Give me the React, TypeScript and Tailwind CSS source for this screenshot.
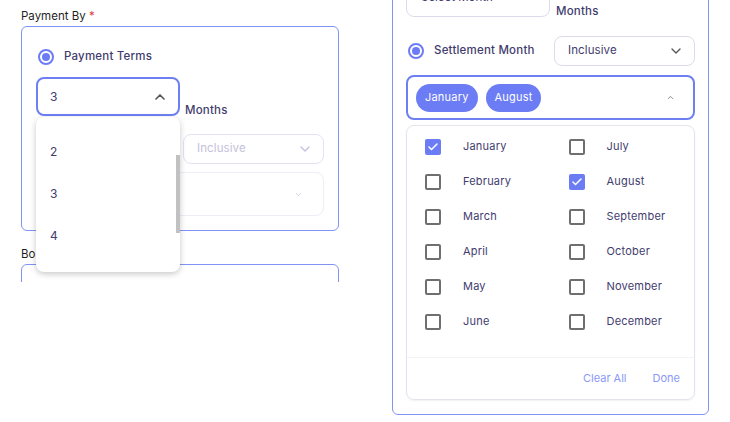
import React from "react";
import { ChevronDown, ChevronUp, Check } from "lucide-react";

const months = [
    "January", "February", "March", "April", "May", "June",
    "July", "August", "September", "October", "November", "December",
];
const selected = ["January", "August"];

const Radio: React.FC<{ checked?: boolean }> = ({ checked }) => (
    <span className={`flex h-4 w-4 items-center justify-center rounded-full border-2 ${checked ? "border-[#6b7cf5]" : "border-[#9a98b0]"}`}>
        {checked && <span className="h-2 w-2 rounded-full bg-[#6b7cf5]" />}
    </span>
);

const Checkbox: React.FC<{ checked?: boolean }> = ({ checked }) =>
    checked ? (
        <span className="flex h-4 w-4 items-center justify-center rounded-[2px] bg-[#6b7cf5]">
            <Check size={12} strokeWidth={3} className="text-white" />
        </span>
    ) : (
        <span className="h-4 w-4 rounded-[2px] border-2 border-[#6f6f6f]" />
    );

const InclusiveSelect: React.FC<{ disabled?: boolean }> = ({ disabled }) => (
    <div className={`flex h-[30px] w-[141px] items-center justify-between rounded-lg border pl-[13px] pr-[10px] text-[11.5px] tracking-[0.1px] ${disabled ? "border-[#e4e2f2] text-[#c5c1dc]" : "border-[#dddbeb] text-[#423c6e]"}`}>
        <span>Inclusive</span>
        <ChevronDown size={16} strokeWidth={2} className={disabled ? "text-[#c5c1dc]" : "text-[#555]"} />
    </div>
);

const LeftPanel: React.FC = () => (
    <div className="ml-[21px] h-[282px] w-[318px] overflow-hidden pt-[8px]">
        <div className="h-[16px] text-[11.5px] leading-4 text-[#1f1f1f]">
            Payment By <span className="text-[#e53e3e]">*</span>
        </div>
        <div className="mt-[2px] rounded-md border border-[#8192f6] px-[14px] pb-[14px] pt-[20px]">
            <div className="flex h-5 items-center gap-[10px] pl-[2px] text-[11.5px] font-medium tracking-[0.2px] text-[#423c6e]">
                <Radio checked />
                <span>Payment Terms</span>
            </div>
            <div className="mt-[10px] flex items-end gap-[5px]">
                <div className="relative">
                    <div className="flex h-[39px] w-[144px] items-center justify-between rounded-lg border-2 border-[#6e7ff3] pl-[12px] pr-[10px] text-[12px] text-[#423c6e]">
                        <span>3</span>
                        <ChevronUp size={16} strokeWidth={2.5} className="text-[#555]" />
                    </div>
                    <div className="absolute left-0 top-[40px] z-10 h-[155px] w-[144px] overflow-hidden rounded-lg bg-white pt-[14px] shadow-[0_2px_6px_rgba(0,0,0,0.22)]">
                        {["2", "3", "4"].map(n => (
                            <div key={n} className="flex h-[42px] items-center pl-[14px] text-[12px] text-[#423c6e]">
                                {n}
                            </div>
                        ))}
                        <div className="absolute right-0 top-[38px] h-[78px] w-[4px] bg-[#c1c1c1]" />
                    </div>
                </div>
                <span className="-mb-[3px] text-[11.5px] font-medium tracking-[0.2px] text-[#423c6e]">Months</span>
            </div>
            <div className="mt-[18px] flex items-center justify-between">
                <div className="flex h-5 items-center gap-[10px] pl-[2px] text-[11.5px] font-medium text-[#c5c1dc]">
                    <Radio />
                    <span>Settlement Month</span>
                </div>
                <InclusiveSelect disabled />
            </div>
            <div className="mt-[8px] flex h-[44px] items-center justify-end rounded-lg border border-[#efeef6] pr-[20px]">
                <ChevronDown size={9} strokeWidth={2} className="text-[#c5c1dc]" />
            </div>
        </div>
        <div className="mt-[15px] h-[16px] text-[11.5px] leading-4 text-[#1f1f1f]">Bonus Type</div>
        <div className="mt-[2px] h-[60px] rounded-md border border-[#8192f6]" />
    </div>
);

const RightPanel: React.FC = () => (
    <div className="ml-[53px] mt-[-72px] w-[317px] self-start rounded-md border border-[#8192f6] px-[13px] pb-[14px] pt-[18px]">
        <div className="flex h-5 items-center gap-[10px] pl-[2px] text-[11.5px] font-medium tracking-[0.2px] text-[#423c6e]">
            <Radio />
            <span>Payment Terms</span>
        </div>
        <div className="mt-[12px] flex items-end gap-[6px]">
            <div className="flex h-[38px] w-[144px] items-center justify-between rounded-lg border border-[#dddbeb] pl-[14px] pr-[10px] text-[11.5px] text-[#423c6e]">
                <span>Select Month</span>
                <ChevronDown size={9} strokeWidth={2} className="text-[#999]" />
            </div>
            <span className="-mb-[3px] text-[11.5px] font-medium tracking-[0.2px] text-[#423c6e]">Months</span>
        </div>
        <div className="mt-[19px] flex items-center justify-between">
            <div className="flex h-5 items-center gap-[10px] pl-[2px] text-[11.5px] font-medium tracking-[0.2px] text-[#423c6e]">
                <Radio checked />
                <span>Settlement Month</span>
            </div>
            <InclusiveSelect />
        </div>
        <div className="mt-[9px] flex h-[45px] items-center justify-between rounded-lg border-2 border-[#6e7ff3] pl-[8px] pr-[18px]">
            <div className="flex gap-[8px]">
                {selected.map(m => (
                    <span key={m} className="flex h-7 items-center rounded-full bg-[#6b7cf5] px-[9px] text-[11px] tracking-[0.2px] text-white">
                        {m}
                    </span>
                ))}
            </div>
            <ChevronUp size={9} strokeWidth={2} className="text-[#666]" />
        </div>
        <div className="mt-[5px] rounded-lg border border-[#e4e3ee] shadow-[0_1px_2px_rgba(0,0,0,0.06)]">
            <div className="grid grid-flow-col grid-cols-2 grid-rows-6 pt-[3px]">
                {months.map(m => (
                    <div key={m} className="flex h-[35px] items-center pl-[18px] text-[11px] tracking-[0.2px] text-[#423c6e]">
                        <Checkbox checked={selected.includes(m)} />
                        <span className="ml-[22px]">{m}</span>
                    </div>
                ))}
            </div>
            <div className="mt-[18px] flex h-[42px] items-center justify-end gap-[26px] border-t border-[#f4f4f8] pr-[14px] text-[11px] text-[#8a98f7]">
                <span>Clear All</span>
                <span>Done</span>
            </div>
        </div>
    </div>
);

export default function App() {
    return (
        <div className="flex h-[422px] w-[730px] overflow-hidden bg-white font-['Inter',sans-serif]">
            <LeftPanel />
            <RightPanel />
        </div>
    );
}
